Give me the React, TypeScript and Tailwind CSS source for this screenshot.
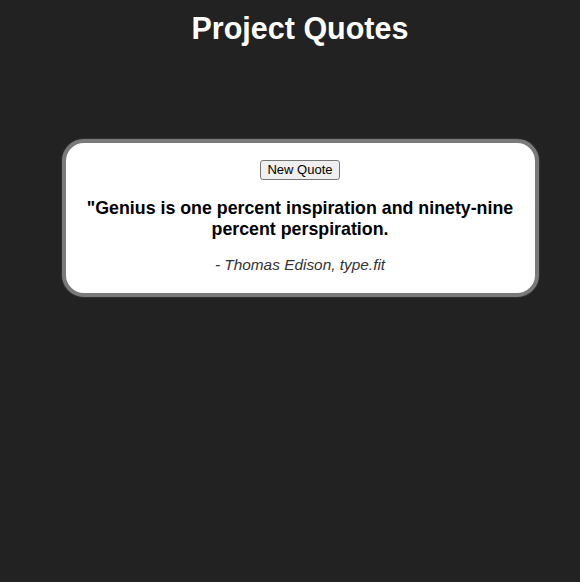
export default function App() {
  return (
    <div className="min-h-[582px] bg-[#222222] pl-5 pt-[10px] font-['Liberation_Sans',Arial,sans-serif]">
      <h1 className="text-center text-[30.5px] font-bold leading-[36px] text-white">Project Quotes</h1>

      {/* Quote card */}
      <div className="mx-auto mt-[93px] w-[477px] rounded-[22px] border-4 border-[#7a7a7a] bg-white px-4 pb-[19px] pt-[14px] text-center shadow-[0_0_2px_#555]">
        <button className="rounded-[3px] border border-[#767676] bg-[#efefef] px-[6px] py-[1px] text-[13px] leading-[16px] text-black">
          New Quote
        </button>
        <p className="mt-[17px] text-[17.8px] font-bold leading-[21px] text-black">
          "Genius is one percent inspiration and ninety-nine percent perspiration.
        </p>
        <p className="mt-[16px] text-[15.4px] italic leading-[18px] text-[#333333]">- Thomas Edison, type.fit</p>
      </div>
    </div>
  );
}
